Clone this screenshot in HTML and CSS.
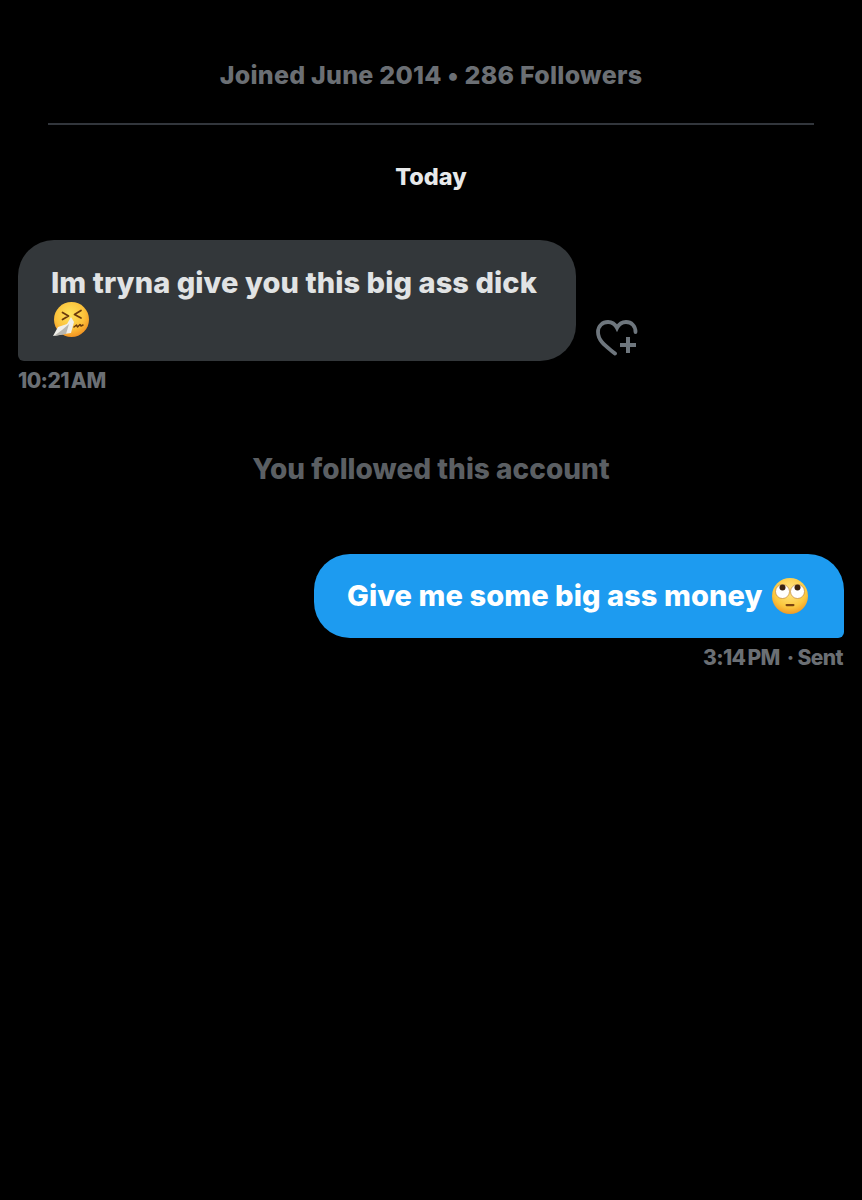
FILE: index.html
```html
<!DOCTYPE html>
<html lang="en">
<head>
<meta charset="utf-8">
<title>Messages</title>
<link rel="stylesheet" href="styles.css">
</head>
<body>
<main class="chat">
  <header class="profile">
    <p class="joined">Joined June 2014 • 286 Followers</p>
    <hr class="divider">
  </header>
  <p class="day">Today</p>
  <section class="incoming">
    <div class="row">
      <div class="bubble bubble-in">
        <p class="msg">Im tryna give you this big ass dick</p>
        <svg class="emoji sneeze" viewBox="0 0 40 40" aria-hidden="true">
          <defs>
            <radialGradient id="face1" cx="45%" cy="35%" r="70%">
              <stop offset="0" stop-color="#ffe45c"/>
              <stop offset="0.6" stop-color="#fcc13a"/>
              <stop offset="1" stop-color="#f08a1d"/>
            </radialGradient>
          </defs>
          <circle cx="20.500" cy="18.500" r="17.500" fill="url(#face1)"/>
          <path d="M11.500 11.500l6 3.500-6 3.500M30 9.500l-6.500 4 6.500 3.500" fill="none" stroke="#6b3a0c" stroke-width="1.700" stroke-linecap="round" stroke-linejoin="round"/>
          <path d="M23 26l2.500-2 1 2 2.500-2.500 1 1.500 2-1" fill="none" stroke="#6b3a0c" stroke-width="1.500" stroke-linecap="round" stroke-linejoin="round"/>
          <path d="M2 35l5-9 9-3 4-7 3 5-3 11-7 1-5 1z" fill="#f0efea"/>
          <path d="M3 35l8-6 7-6-3 10z" fill="#b9b7b0"/>
        </svg>
      </div>
      <svg class="react" viewBox="0 0 42 38" aria-hidden="true">
        <path d="M19 35.500C12 29.500 2 24 2 14 2 8 6.500 4 12 4c3.500 0 7 2 9 6 2-4 5.500-6 9-6 5.500 0 9.500 4 9.500 10" fill="none" stroke="currentColor" stroke-width="3.800" stroke-linecap="round"/>
        <path d="M32 19v16M24 27h16" fill="none" stroke="currentColor" stroke-width="4"/>
      </svg>
    </div>
    <p class="meta">10:21 AM</p>
  </section>
  <p class="notice">You followed this account</p>
  <section class="outgoing">
    <div class="bubble bubble-out">
      <p class="msg">Give me some big ass money</p>
      <svg class="emoji eyes" viewBox="0 0 40 40" aria-hidden="true">
        <defs>
          <radialGradient id="face2" cx="50%" cy="35%" r="70%">
            <stop offset="0" stop-color="#ffe98a"/>
            <stop offset="0.65" stop-color="#fcc83f"/>
            <stop offset="1" stop-color="#ee8f1f"/>
          </radialGradient>
        </defs>
        <circle cx="20" cy="20" r="18" fill="url(#face2)"/>
        <circle cx="12.500" cy="15.500" r="7" fill="#fff" stroke="#b5762a" stroke-width="0.600"/>
        <circle cx="27.500" cy="15.500" r="7" fill="#fff" stroke="#b5762a" stroke-width="0.600"/>
        <circle cx="12.500" cy="11.500" r="3" fill="#3a2410"/>
        <circle cx="27.500" cy="11.500" r="3" fill="#3a2410"/>
        <rect x="15.500" y="28" width="9" height="2.200" rx="1.100" fill="#7a4310"/>
      </svg>
    </div>
    <p class="meta meta-out"><span>3:14 PM</span><span class="sent">· Sent</span></p>
  </section>
</main>
</body>
</html>
```
FILE: styles.css
```css
* { box-sizing: border-box; }
html, body { margin: 0; background: #000; }
body {
  min-height: 1200px;
  font-family: Inter, "Liberation Sans", sans-serif;
  font-weight: 800;
}
p { margin: 0; }
.chat { display: flex; flex-direction: column; padding: 60px 18px 0; }
.profile { display: flex; flex-direction: column; align-items: center; }
.joined { font-size: 25px; line-height: 30px; letter-spacing: 0.25px; color: #6b6f74; }
.divider { width: 766px; height: 2px; margin: 33px 0 0; border: 0; background: #32363c; }
.day { margin-top: 37px; text-align: center; font-size: 23.5px; line-height: 30px; color: #e7e9ea; }
.incoming { margin-top: 48px; }
.row { display: flex; align-items: flex-end; gap: 20px; }
.bubble { display: flex; }
.bubble-in {
  flex-direction: column;
  align-items: flex-start;
  width: 558px;
  height: 121px;
  padding: 25px 33px 0;
  border-radius: 36px 36px 36px 6px;
  background: #33373a;
  color: #e1e3e4;
}
.msg { font-size: 29px; line-height: 36px; white-space: nowrap; letter-spacing: 0.08px; }
.emoji { display: block; flex: none; }
.sneeze { width: 40px; height: 40px; }
.react { width: 42px; height: 38px; margin-bottom: 5px; color: #6e767d; }
.meta { font-size: 21px; line-height: 24px; color: #6b6f74; letter-spacing: -0.6px; word-spacing: -2px; margin-top: 8px; }
.notice { margin-top: 60px; text-align: center; font-size: 28px; line-height: 32px; letter-spacing: 0.02px; color: #5b5f63; }
.outgoing { display: flex; flex-direction: column; align-items: flex-end; margin-top: 69px; }
.bubble-out {
  align-items: center;
  gap: 8px;
  width: 530px;
  height: 84px;
  padding: 0 33px;
  border-radius: 36px 36px 6px 36px;
  background: #1d9bf0;
  color: #fff;
}
.eyes { width: 40px; height: 40px; }
.meta-out { display: flex; gap: 7px; margin-top: 8px; padding-right: 1px; }
.sent { word-spacing: 0; }
```
